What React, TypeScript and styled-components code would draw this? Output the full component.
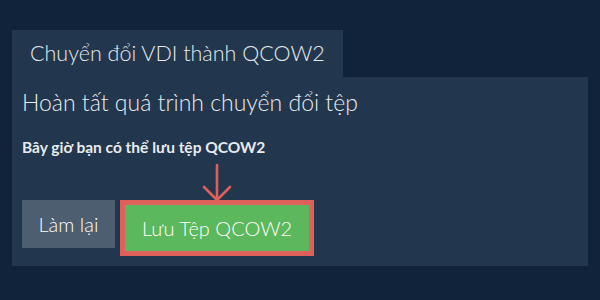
import React from "react";
import styled, { createGlobalStyle } from "styled-components";

const GlobalStyle = createGlobalStyle`
  html, body {
    margin: 0;
    padding: 0;
    background: #11233a;
  }
  body {
    font-family: Lato, "Noto Sans", "Liberation Sans", sans-serif;
    color: #ebeef1;
  }
`;

const Page = styled.div`
  width: 600px;
  height: 300px;
  box-sizing: border-box;
  padding: 30px 12px 0;
  background: #11233a;
`;

const Tab = styled.div`
  display: inline-block;
  height: 47px;
  line-height: 47px;
  padding: 0 18px;
  background: #22374d;
  font-size: 21.5px;
  font-weight: 300;
  color: #e6e9ec;
`;

const Panel = styled.div`
  background: #22374d;
  padding: 10px 10px 10px;
  height: 189px;
  box-sizing: border-box;
  display: flex;
  flex-direction: column;
`;

const Title = styled.h1`
  margin: 1px 0 0;
  font-size: 23px;
  font-weight: 300;
  line-height: 29px;
  color: #e8ebee;
`;

const Subtitle = styled.p`
  margin: 21px 0 0;
  font-size: 15.5px;
  font-weight: 700;
  line-height: 18px;
  color: #e8ebee;
`;

const ButtonRow = styled.div`
  margin-top: auto;
  display: flex;
  align-items: flex-start;
  gap: 5px;
`;

const Button = styled.button<{ $variant: "gray" | "green" }>`
  font-family: Lato, "Noto Sans", "Liberation Sans", sans-serif;
  font-size: 20px;
  font-weight: 300;
  color: #ffffff;
  border: none;
  margin: 0;
  cursor: pointer;
  background: ${(p) => (p.$variant === "green" ? "#5cb85c" : "#4d5e70")};
  height: ${(p) => (p.$variant === "green" ? "46px" : "48px")};
  padding: ${(p) => (p.$variant === "green" ? "0 17px" : "0 16.5px")};
`;

const Highlight = styled.div`
  position: relative;
  border: 5px solid #df5f5b;
  display: flex;
`;

const Arrow = styled.svg`
  position: absolute;
  left: 50%;
  bottom: 100%;
  margin-left: -15px;
  margin-bottom: 3px;
  width: 30px;
  height: 38px;
  overflow: visible;
`;

export default function App() {
  return (
    <>
      <GlobalStyle />
      <Page>
        <Tab>Chuyển đổi VDI thành QCOW2</Tab>
        <Panel>
          <Title>Hoàn tất quá trình chuyển đổi tệp</Title>
          <Subtitle>Bây giờ bạn có thể lưu tệp QCOW2</Subtitle>
          <ButtonRow>
            <Button $variant="gray">Làm lại</Button>
            <Highlight>
              <Arrow viewBox="0 0 30 38">
                <path
                  d="M15 1 V36 M2 23 L15 36 L28 23"
                  fill="none"
                  stroke="#df5f5b"
                  strokeWidth="2.6"
                  strokeLinecap="round"
                  strokeLinejoin="round"
                />
              </Arrow>
              <Button $variant="green">Lưu Tệp QCOW2</Button>
            </Highlight>
          </ButtonRow>
        </Panel>
      </Page>
    </>
  );
}
